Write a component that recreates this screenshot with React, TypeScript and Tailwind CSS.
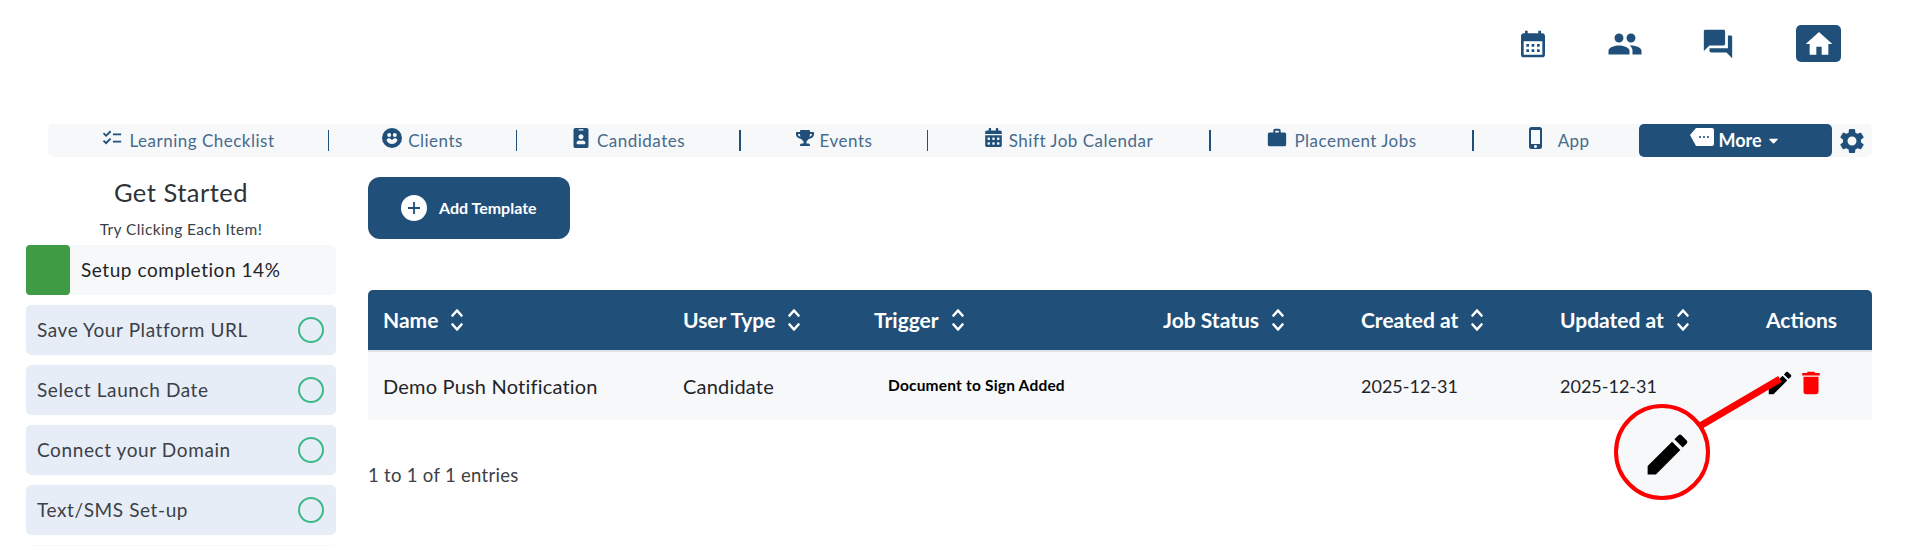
import React from "react";
import { MdCalendarMonth, MdPeople, MdForum, MdHome, MdChecklist, MdPhoneIphone, MdSettings, MdEdit, MdDelete, MdWork } from "react-icons/md";
import { FaTrophy, FaIdBadge, FaCalendarAlt, FaCaretDown } from "react-icons/fa";

const font = "font-['Lato','Noto_Sans',sans-serif]";

function ClientsIcon() {
  return (
    <svg width="20" height="20" viewBox="0 0 20 20">
      <circle cx="10" cy="10" r="10" fill="#20507a" />
      <circle cx="7.200" cy="7" r="2" fill="#f6f8fa" />
      <circle cx="12.800" cy="7" r="2" fill="#f6f8fa" />
      <path d="M4.500 12c1-2 3-2.500 5.500 0 2.500-2.500 4.500-2 5.500 0-1 2.500-3 4-5.500 4s-4.500-1.500-5.500-4z" fill="#f6f8fa" />
    </svg>
  );
}

function TagIcon() {
  return (
    <svg width="24" height="18" viewBox="0 0 24 18">
      <path d="M6 0h16a2 2 0 0 1 2 2v14a2 2 0 0 1-2 2H6L0 7z" fill="#fff" />
      <circle cx="10" cy="9" r="1.100" fill="#20507a" />
      <circle cx="14" cy="9" r="1.100" fill="#20507a" />
      <circle cx="18" cy="9" r="1.100" fill="#20507a" />
    </svg>
  );
}

function SortIcon() {
  return (
    <svg width="14" height="24" viewBox="0 0 14 24" fill="none" stroke="#fff" strokeWidth="2.600" strokeLinecap="round" strokeLinejoin="round" className="ml-[12px]">
      <path d="M2.500 7.500 7 2.500l4.500 5" />
      <path d="M2.500 16.500 7 21.500l4.500-5" />
    </svg>
  );
}

const navItems = [
  { label: "Learning Checklist", icon: <MdChecklist size={22} />, width: "w-[281px]", line: "w-px" },
  { label: "Clients", icon: <ClientsIcon />, width: "w-[188px]", line: "w-px" },
  { label: "Candidates", icon: <FaIdBadge size={20} />, width: "w-[224px]", line: "w-[2px]" },
  { label: "Events", icon: <FaTrophy size={18} />, width: "w-[187px]", line: "w-px" },
  { label: "Shift Job Calendar", icon: <FaCalendarAlt size={19} />, width: "w-[283px]", line: "w-[2px]" },
  { label: "Placement Jobs", icon: <MdWork size={22} />, width: "w-[263px]", line: "w-[2px]" },
];

const checklist = ["Save Your Platform URL", "Select Launch Date", "Connect your Domain", "Text/SMS Set-up"];

const headers = ["Name", "User Type", "Trigger", "Job Status", "Created at", "Updated at"];
const cols = "grid grid-cols-[300px_191px_289px_198px_199px_206px_121px]";

export default function App() {
  return (
    <div className={`relative h-[546px] w-[1908px] overflow-hidden bg-white ${font}`}>
      {/* top icons */}
      <div className="flex h-[124px] items-start justify-end pr-[67px] pt-[25px] text-[#20507a]">
        <div className="flex h-[37px] items-center gap-[58px]">
          <MdCalendarMonth size={32} />
          <MdPeople size={36} />
          <MdForum size={34} />
          <div className="ml-[3px] flex h-[37px] w-[45px] items-center justify-center rounded-[5px] bg-[#20507a] text-white">
            <MdHome size={32} />
          </div>
        </div>
      </div>

      {/* nav */}
      <div className="ml-[48px] flex h-[33px] w-[1824px] items-center rounded-[5px] bg-[#f6f8fa] text-[17px] text-[#466b8c]">
        {navItems.map((item) => (
          <div key={item.label} className={`flex h-full items-center ${item.width}`}>
            <div className="flex flex-1 items-center justify-center gap-[6px]">
              <span className="mt-[-6px] text-[#20507a]">{item.icon}</span>
              <span className="tracking-[0.5px]">{item.label}</span>
            </div>
            <div className={`h-[21px] bg-[#20507a] ${item.line}`} />
          </div>
        ))}
        <div className="flex h-full w-[165px] items-center justify-center gap-[10px]">
          <span className="mt-[-6px] text-[#20507a]"><MdPhoneIphone size={24} /></span>
          <span className="tracking-[0.4px]">App</span>
        </div>
        <div className="flex h-full w-[193px] items-center justify-center gap-[4px] rounded-[5px] bg-[#20507a] text-[18px] font-bold text-white">
          <span className="mt-[-8px]"><TagIcon /></span>
          <span>More</span>
          <FaCaretDown size={15} />
        </div>
        <div className="flex flex-1 items-center justify-center text-[#20507a]">
          <MdSettings size={30} />
        </div>
      </div>

      <div className="flex pt-[20px]">
        {/* sidebar */}
        <aside className="ml-[26px] w-[310px] shrink-0 text-[#3b4046]">
          <h2 className="text-center text-[25.500px] leading-[30px] tracking-[0.5px] text-[#2e3338]">Get Started</h2>
          <p className="mt-[12px] text-center text-[15.500px] leading-[20px] tracking-[0.4px]">Try Clicking Each Item!</p>
          <div className="mt-[6px] flex h-[50px] items-center rounded-[5px] bg-[#f6f8fa]">
            <div className="h-full w-[44px] rounded-[4px] bg-[#409b45]" />
            <span className="ml-[11px] text-[19px] tracking-[0.55px] text-[#1f2428]">Setup completion 14%</span>
          </div>
          {checklist.map((label) => (
            <div key={label} className="mt-[10px] flex h-[50px] items-center justify-between rounded-[5px] bg-[#e7edf7] pl-[11px] pr-[12px] text-[19px] tracking-[0.6px]">
              <span>{label}</span>
              <span className="h-[26px] w-[26px] rounded-full border-[2.500px] border-[#3cb987]" />
            </div>
          ))}
          <div className="mt-[10px] h-[50px] rounded-[5px] bg-[#f6f8fa]" />
        </aside>

        {/* main */}
        <main className="ml-[32px] w-[1504px]">
          <button className="flex h-[62px] w-[202px] items-center rounded-[12px] bg-[#20507a] pl-[33px] text-[16px] font-bold text-white">
            <span className="flex h-[26px] w-[26px] items-center justify-center rounded-full bg-white">
              <svg width="14" height="14" viewBox="0 0 14 14" stroke="#20507a" strokeWidth="1.800"><path d="M7 1v12M1 7h12" /></svg>
            </span>
            <span className="ml-[12px]">Add Template</span>
          </button>

          <div className="mt-[51px]">
            <div className={`${cols} h-[60px] items-center rounded-t-[5px] bg-[#20507a] text-[21px] font-bold text-white`}>
              {headers.map((h) => (
                <div key={h} className="flex items-center pl-[15px]">
                  <span>{h}</span>
                  <SortIcon />
                </div>
              ))}
              <div className="pl-[15px]">Actions</div>
            </div>
            <div className={`${cols} h-[70px] items-center border-t-[2px] border-[#dee2e6] bg-[#f6f8fa] text-[20px] text-[#1f2428]`}>
              <div className="pl-[15px] tracking-[0.2px]">Demo Push Notification</div>
              <div className="pl-[15px] tracking-[0.2px]">Candidate</div>
              <div className="pl-[29px] text-[15.500px] font-bold tracking-[0.2px] text-black">Document to Sign Added</div>
              <div />
              <div className="pl-[15px] text-[18px]">2025-12-31</div>
              <div className="pl-[15px] text-[18px]">2025-12-31</div>
              <div className="flex items-center gap-[1px] pl-[14px]">
                <MdEdit size={30} className="mt-[-6px] text-black" />
                <MdDelete size={30} className="mt-[-6px] text-[#ff0000]" />
              </div>
            </div>
          </div>

          <p className="mt-[42px] text-[18.500px] tracking-[0.3px] text-[#3b4046]">1 to 1 of 1 entries</p>
        </main>
      </div>

      {/* annotation */}
      <svg className="absolute left-[1690px] top-[370px]" width="100" height="66" viewBox="0 0 100 66">
        <line x1="10" y1="56" x2="90" y2="9" stroke="#ff0000" strokeWidth="7" />
      </svg>
      <div className="absolute left-[1614px] top-[404px] flex h-[96px] w-[96px] items-center justify-center rounded-full border-[4px] border-[#ff0000] bg-[#f6f8fa] pl-[10px] pt-[4px]">
        <MdEdit size={53} className="shrink-0 text-black" />
      </div>
    </div>
  );
}
